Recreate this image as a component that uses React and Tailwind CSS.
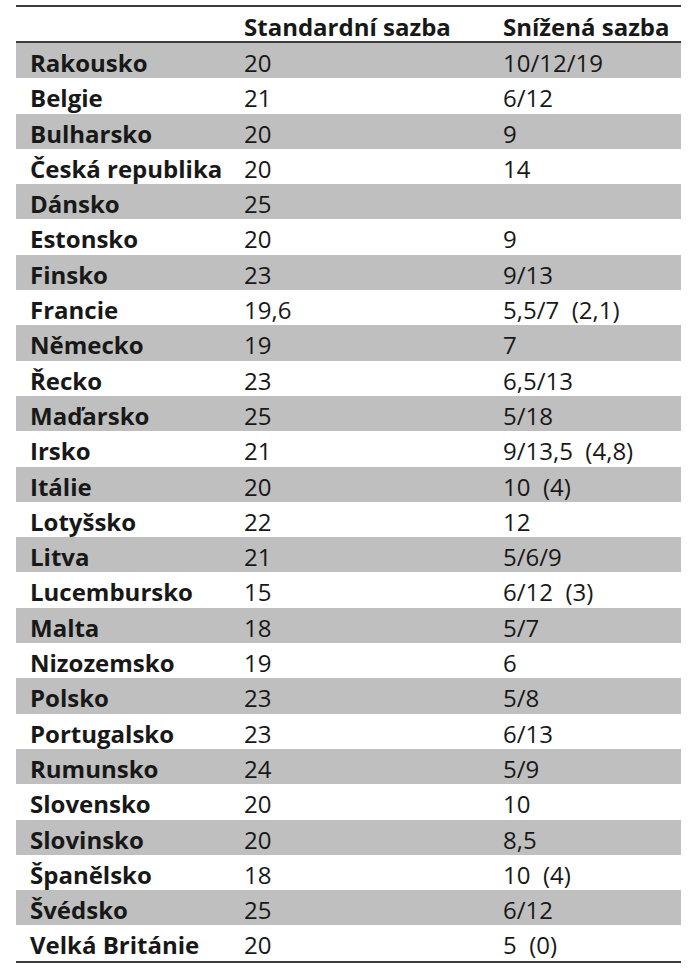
const rows = [
  ["Rakousko", "20", "10/12/19"],
  ["Belgie", "21", "6/12"],
  ["Bulharsko", "20", "9"],
  ["Česká republika", "20", "14"],
  ["Dánsko", "25", ""],
  ["Estonsko", "20", "9"],
  ["Finsko", "23", "9/13"],
  ["Francie", "19,6", "5,5/7\u00a0 (2,1)"],
  ["Německo", "19", "7"],
  ["Řecko", "23", "6,5/13"],
  ["Maďarsko", "25", "5/18"],
  ["Irsko", "21", "9/13,5\u00a0 (4,8)"],
  ["Itálie", "20", "10\u00a0 (4)"],
  ["Lotyšsko", "22", "12"],
  ["Litva", "21", "5/6/9"],
  ["Lucembursko", "15", "6/12\u00a0 (3)"],
  ["Malta", "18", "5/7"],
  ["Nizozemsko", "19", "6"],
  ["Polsko", "23", "5/8"],
  ["Portugalsko", "23", "6/13"],
  ["Rumunsko", "24", "5/9"],
  ["Slovensko", "20", "10"],
  ["Slovinsko", "20", "8,5"],
  ["Španělsko", "18", "10\u00a0 (4)"],
  ["Švédsko", "25", "6/12"],
  ["Velká Británie", "20", "5\u00a0 (0)"],
];

export default function App() {
  return (
    <div
      className="w-[688px] h-[969px] bg-white pt-[5px] pl-[16px] text-[#181818]"
      style={{ fontFamily: '"Open Sans", "Noto Sans", sans-serif' }}
    >
      <div className="w-[665px] border-t-2 border-b-2 border-[#3c3c3c]">
        <div className="grid grid-cols-[214px_259px_1fr] pl-[14px] h-[36px] pt-[4px] leading-[32px] text-[24px] font-bold border-b-2 border-[#3c3c3c]">
          <div></div>
          <div>Standardní sazba</div>
          <div>Snížená sazba</div>
        </div>
        {rows.map((r, i) => (
          <div
            key={r[0]}
            className={
              "grid grid-cols-[214px_259px_1fr] pl-[14px] h-[35.3px] pt-[4px] leading-[31.3px] text-[24px] whitespace-pre " +
              (i % 2 === 0 ? "bg-[#bfbfbf]" : "bg-white")
            }
          >
            <div className="font-bold">{r[0]}</div>
            <div>{r[1]}</div>
            <div>{r[2]}</div>
          </div>
        ))}
      </div>
    </div>
  );
}
